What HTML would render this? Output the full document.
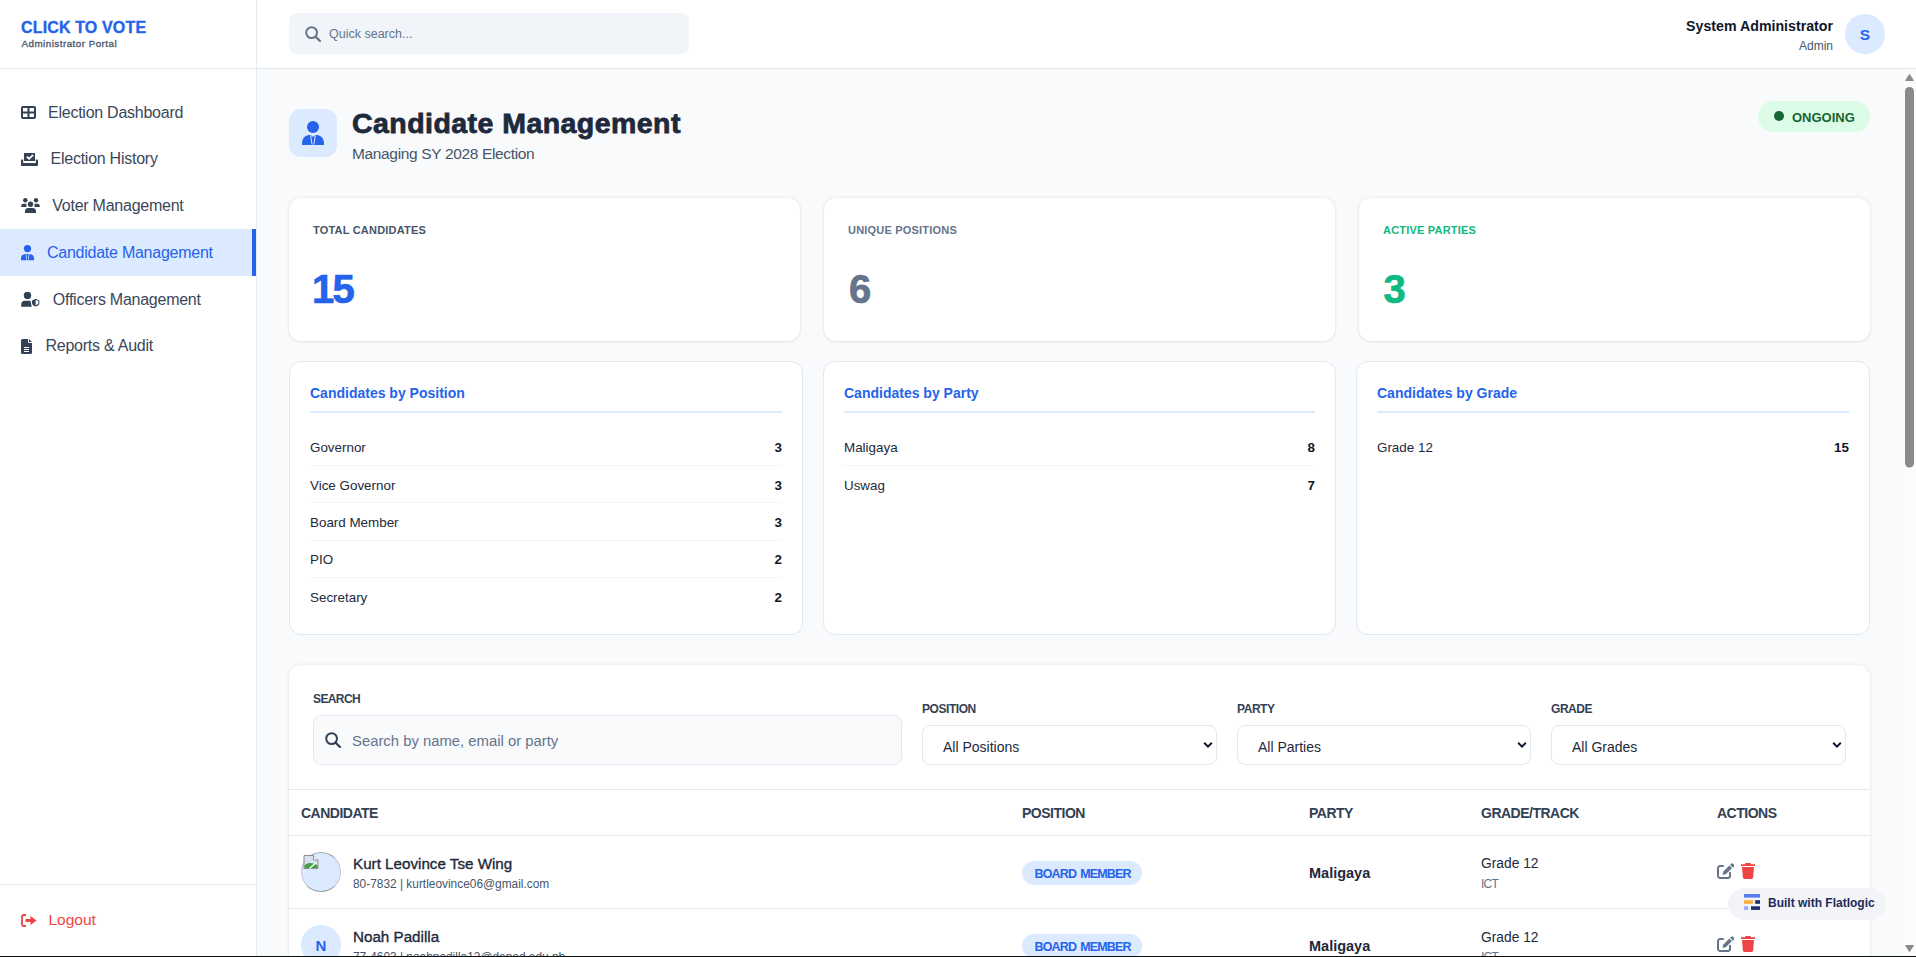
<!DOCTYPE html>
<html>
<head>
<meta charset="utf-8">
<style>
*{box-sizing:border-box;margin:0;padding:0}
html,body{width:1916px;height:957px;overflow:hidden;background:#fff}
body{font-family:"Liberation Sans",sans-serif;position:relative;color:#1e293b}
.abs{position:absolute;white-space:nowrap}
svg{display:block}
/* sidebar */
#side{position:absolute;left:0;top:0;width:256px;height:957px;background:#fff}
#sideb{position:absolute;left:256px;top:0;width:1px;height:957px;background:#e2e8f0}
#hdrb{position:absolute;left:0;top:68px;width:1916px;height:1px;background:#e2e8f0}
.nav{position:absolute;left:0;width:256px;height:47px}
.nav .t{position:absolute;top:-0.3px;line-height:47px;font-size:16px;letter-spacing:-0.25px;color:#3a475b}
.nav svg{position:absolute}
.nav.act{background:#dbeafe}
.nav.act .t{color:#2563eb}
.nav.act:after{content:"";position:absolute;right:0;top:0;width:4px;height:100%;background:#2563eb}
/* main */
#main{position:absolute;left:257px;top:69px;width:1645px;height:888px;background:#f8fafc;overflow:hidden}
#sb{position:absolute;left:1902px;top:69px;width:14px;height:888px;background:#fbfbfb}
.card{position:absolute;background:#fff;border-radius:12px;box-shadow:0 0 3.5px rgba(0,0,0,.11),0 1px 2px rgba(0,0,0,.05)}
.bcard{position:absolute;background:#fff;border-radius:12px;border:1px solid #e2e8f0}
</style>
</head>
<body>
<!-- SIDEBAR -->
<div id="side">
  <div class="abs" style="left:21px;top:17px;font-size:16px;font-weight:700;color:#2563eb;line-height:22px;letter-spacing:0.15px;transform:scaleY(1.06);transform-origin:0 100%;-webkit-text-stroke:0.35px #2563eb">CLICK TO VOTE</div>
  <div class="abs" style="left:21.5px;top:38.1px;font-size:9.8px;font-weight:400;color:#475569;line-height:12px;letter-spacing:0.48px;-webkit-text-stroke:0.3px #475569">Administrator Portal</div>

  <div class="nav" style="top:89px">
    <svg style="left:21px;top:17px" width="15" height="13" viewBox="0 0 15 13"><path fill="#334155" d="M2 0h11a2 2 0 0 1 2 2v9a2 2 0 0 1-2 2H2a2 2 0 0 1-2-2V2a2 2 0 0 1 2-2zM2 2v3.5h4.5V2zm6.5 0v3.5H13V2zM2 7.5V11h4.5V7.5zm6.5 0V11H13V7.5z"/></svg>
    <div class="t" style="left:48px">Election Dashboard</div>
  </div>
  <div class="nav" style="top:135.75px">
    <svg style="left:21px;top:17.25px" width="17" height="13" viewBox="0 0 17 13"><path fill="#334155" d="M3 0h11v8H3z"/><path fill="#fff" d="M5.2 4.2l1.3-1.2 1.6 1.6 3.5-3.4 1.2 1.2-4.7 4.6z"/><path fill="#334155" d="M0 7.5a1 1 0 0 1 1-1h1.2V10h12.6V6.5H16a1 1 0 0 1 1 1V12a1 1 0 0 1-1 1H1a1 1 0 0 1-1-1z"/></svg>
    <div class="t" style="left:50.5px">Election History</div>
  </div>
  <div class="nav" style="top:182.5px">
    <svg style="left:21px;top:15.5px" width="19" height="15" viewBox="0 0 19 15"><circle cx="4.3" cy="2.2" r="2.2" fill="#334155"/><circle cx="15" cy="2.2" r="2.2" fill="#334155"/><path fill="#334155" d="M0.2 9V8.2A2.4 2.4 0 0 1 2.6 5.8h3a3.6 3.6 0 0 0 .2 3.2zM18.8 9V8.2a2.4 2.4 0 0 0-2.4-2.4h-3a3.6 3.6 0 0 1-.2 3.2z"/><circle cx="9.5" cy="6.3" r="2.7" fill="#334155"/><path fill="#334155" d="M4 15v-1.6A3.4 3.4 0 0 1 7.4 10h4.2a3.4 3.4 0 0 1 3.4 3.4V15z"/></svg>
    <div class="t" style="left:52.3px">Voter Management</div>
  </div>
  <div class="nav act" style="top:229.25px">
    <svg style="left:21px;top:15.75px" width="13" height="16" viewBox="0 0 13 16"><circle cx="6.5" cy="3.6" r="3.6" fill="#2563eb"/><path fill="#2563eb" d="M0 15.2v-1.2A5 5 0 0 1 4.2 8.9h4.6A5 5 0 0 1 13 14v1.2z"/><path d="M5 9.1l.7 5.6M8 9.1l-.7 5.6" stroke="#dbeafe" stroke-width="0.75" fill="none"/></svg>
    <div class="t" style="left:47px">Candidate Management</div>
  </div>
  <div class="nav" style="top:276px">
    <svg style="left:21px;top:16px" width="19" height="15" viewBox="0 0 19 15"><circle cx="6.5" cy="3.4" r="3.7" fill="#334155"/><path fill="#334155" d="M0.2 14.8V12.6A3.8 3.8 0 0 1 4 8.8h4.6a3.8 3.8 0 0 1 2 .6V14.8z"/><path d="M14.7 6.3l4.3 1.8v2.6c0 2.3-1.8 3.8-4.3 4.4-2.5-.6-4.3-2.1-4.3-4.4V8.1z" fill="#334155" stroke="#fff" stroke-width="1.2"/><path d="M14.7 8v5.4c1.6-.5 2.7-1.5 2.7-2.8V9.1z" fill="#fff"/></svg>
    <div class="t" style="left:52.8px">Officers Management</div>
  </div>
  <div class="nav" style="top:322.75px">
    <svg style="left:21px;top:16.25px" width="11" height="15" viewBox="0 0 11 15"><path fill="#334155" d="M1.5 0H7v2.8A1.2 1.2 0 0 0 8.2 4H11v9.5A1.5 1.5 0 0 1 9.5 15h-8A1.5 1.5 0 0 1 0 13.5v-12A1.5 1.5 0 0 1 1.5 0zM8 0l3 3H8z"/><path fill="#fff" d="M3 8h5v1H3zm0 2h5v1H3zm0 2h5v1H3z"/></svg>
    <div class="t" style="left:45.5px">Reports &amp; Audit</div>
  </div>

  <div class="abs" style="left:0;top:884px;width:256px;height:1px;background:#e2e8f0"></div>
  <svg class="abs" style="left:20.5px;top:914px" width="16" height="13" viewBox="0 0 16 13"><path fill="none" stroke="#ef4444" stroke-width="1.8" d="M5 1H2.5A1.5 1.5 0 0 0 1 2.5v8A1.5 1.5 0 0 0 2.5 12H5"/><path fill="#ef4444" d="M4.5 5h5V2l6 4.5-6 4.5V8h-5z"/></svg>
  <div class="abs" style="left:48.5px;top:910px;font-size:15.5px;line-height:20px;color:#ef4444">Logout</div>
</div>
<div id="sideb"></div>

<!-- HEADER -->
<div class="abs" style="left:289px;top:13px;width:400px;height:41px;background:#f1f5f9;border-radius:8px"></div>
<svg class="abs" style="left:305px;top:26px" width="16" height="16" viewBox="0 0 16 16"><circle cx="6.6" cy="6.6" r="5.4" fill="none" stroke="#64748b" stroke-width="2"/><path d="M10.6 10.6l4.4 4.4" stroke="#64748b" stroke-width="2.2" stroke-linecap="round"/></svg>
<div class="abs" style="left:329px;top:26px;font-size:12.5px;line-height:16px;color:#64748b">Quick search...</div>

<div class="abs" style="top:16.5px;font-size:14.2px;font-weight:700;line-height:18px;color:#0f172a;text-align:right;right:83px">System Administrator</div>
<div class="abs" style="right:83px;top:37.5px;font-size:12px;line-height:16px;color:#475569;text-align:right">Admin</div>
<div class="abs" style="left:1845px;top:14px;width:40px;height:40px;border-radius:50%;background:#dbeafe;color:#2563eb;font-weight:700;font-size:15.5px;line-height:42px;text-align:center">S</div>

<div id="hdrb"></div>

<!-- MAIN -->
<div id="main"></div>
<div id="sb"></div>

<!-- page header -->
<div class="abs" style="left:289px;top:109px;width:48px;height:48px;border-radius:12px;background:#dbeafe"></div>
<svg class="abs" style="left:302px;top:121px" width="22" height="24" viewBox="0 0 22 24"><circle cx="11" cy="6" r="6" fill="#2563eb"/><path fill="#2563eb" d="M0 24v-2A8.5 8.5 0 0 1 6.5 14h9A8.5 8.5 0 0 1 22 22v2z"/><path d="M8.6 14.3l1.5 9.2M13.4 14.3l-1.5 9.2" stroke="#dbeafe" stroke-width="1" fill="none"/><path d="M9.3 14h3.4l-.6 1.6h-2.2z" fill="#dbeafe"/></svg>
<div class="abs" style="left:352px;top:105px;font-size:28.5px;font-weight:700;line-height:36px;color:#1e293b;letter-spacing:0.45px;-webkit-text-stroke:0.8px #1e293b">Candidate Management</div>
<div class="abs" style="left:352px;top:145.4px;font-size:15.5px;line-height:18px;color:#475569;letter-spacing:-0.35px">Managing SY 2028 Election</div>

<div class="abs" style="left:1758px;top:101px;width:112px;height:31px;border-radius:16px;background:#dcfce7"></div>
<div class="abs" style="left:1774px;top:111px;width:10px;height:10px;border-radius:50%;background:#166534"></div>
<div class="abs" style="left:1792px;top:109px;font-size:13px;font-weight:700;line-height:18px;color:#166534">ONGOING</div>

<!-- stat cards -->
<div class="card" style="left:289px;top:198px;width:511px;height:143px"></div>
<div class="card" style="left:824px;top:198px;width:511px;height:143px"></div>
<div class="card" style="left:1359px;top:198px;width:511px;height:143px"></div>
<div class="abs" style="left:313px;top:223px;font-size:11px;font-weight:700;line-height:14px;color:#475569;letter-spacing:0.2px">TOTAL CANDIDATES</div>
<div class="abs" style="left:848px;top:223px;font-size:11px;font-weight:700;line-height:14px;color:#64748b;letter-spacing:0.2px">UNIQUE POSITIONS</div>
<div class="abs" style="left:1383px;top:223px;font-size:11px;font-weight:700;line-height:14px;color:#10b981;letter-spacing:0.2px">ACTIVE PARTIES</div>
<div class="abs" style="left:312px;top:266px;font-size:40px;font-weight:700;line-height:46px;color:#2563eb;letter-spacing:-1.8px;-webkit-text-stroke:0.7px #2563eb">15</div>
<div class="abs" style="left:849px;top:266px;font-size:40px;font-weight:700;line-height:46px;color:#64748b;-webkit-text-stroke:0.7px #64748b">6</div>
<div class="abs" style="left:1383.5px;top:266px;font-size:40px;font-weight:700;line-height:46px;color:#10b981;-webkit-text-stroke:0.7px #10b981">3</div>

<!-- breakdown cards -->
<div class="bcard" style="left:289px;top:361px;width:513.67px;height:274px"></div>
<div class="bcard" style="left:822.67px;top:361px;width:513.67px;height:274px"></div>
<div class="bcard" style="left:1356.33px;top:361px;width:513.67px;height:274px"></div>

<div class="abs" style="left:310px;top:384px;font-size:14px;font-weight:700;line-height:18px;color:#2563eb">Candidates by Position</div>
<div class="abs" style="left:310px;top:411px;width:472px;height:2px;background:#dbeafe"></div>
<div class="abs" style="left:844px;top:384px;font-size:14px;font-weight:700;line-height:18px;color:#2563eb">Candidates by Party</div>
<div class="abs" style="left:844px;top:411px;width:471px;height:2px;background:#dbeafe"></div>
<div class="abs" style="left:1377px;top:384px;font-size:14px;font-weight:700;line-height:18px;color:#2563eb">Candidates by Grade</div>
<div class="abs" style="left:1377px;top:411px;width:472px;height:2px;background:#dbeafe"></div>
<div class="abs" style="left:310px;top:440.2px;font-size:13.4px;line-height:16px;color:#1e293b">Governor</div>
<div class="abs" style="left:722px;width:60px;text-align:right;top:440.2px;font-size:13.4px;font-weight:700;line-height:16px;color:#0f172a">3</div>
<div class="abs" style="left:310px;top:465.1px;width:472px;height:1px;background:#f1f5f9"></div>
<div class="abs" style="left:310px;top:477.6px;font-size:13.4px;line-height:16px;color:#1e293b">Vice Governor</div>
<div class="abs" style="left:722px;width:60px;text-align:right;top:477.6px;font-size:13.4px;font-weight:700;line-height:16px;color:#0f172a">3</div>
<div class="abs" style="left:310px;top:502.4px;width:472px;height:1px;background:#f1f5f9"></div>
<div class="abs" style="left:310px;top:514.9px;font-size:13.4px;line-height:16px;color:#1e293b">Board Member</div>
<div class="abs" style="left:722px;width:60px;text-align:right;top:514.9px;font-size:13.4px;font-weight:700;line-height:16px;color:#0f172a">3</div>
<div class="abs" style="left:310px;top:539.7px;width:472px;height:1px;background:#f1f5f9"></div>
<div class="abs" style="left:310px;top:552.2px;font-size:13.4px;line-height:16px;color:#1e293b">PIO</div>
<div class="abs" style="left:722px;width:60px;text-align:right;top:552.2px;font-size:13.4px;font-weight:700;line-height:16px;color:#0f172a">2</div>
<div class="abs" style="left:310px;top:577.0px;width:472px;height:1px;background:#f1f5f9"></div>
<div class="abs" style="left:310px;top:589.5px;font-size:13.4px;line-height:16px;color:#1e293b">Secretary</div>
<div class="abs" style="left:722px;width:60px;text-align:right;top:589.5px;font-size:13.4px;font-weight:700;line-height:16px;color:#0f172a">2</div>
<div class="abs" style="left:844px;top:440.2px;font-size:13.4px;line-height:16px;color:#1e293b">Maligaya</div>
<div class="abs" style="left:1255px;width:60px;text-align:right;top:440.2px;font-size:13.4px;font-weight:700;line-height:16px;color:#0f172a">8</div>
<div class="abs" style="left:844px;top:465.1px;width:471px;height:1px;background:#f1f5f9"></div>
<div class="abs" style="left:844px;top:477.6px;font-size:13.4px;line-height:16px;color:#1e293b">Uswag</div>
<div class="abs" style="left:1255px;width:60px;text-align:right;top:477.6px;font-size:13.4px;font-weight:700;line-height:16px;color:#0f172a">7</div>
<div class="abs" style="left:1377px;top:440.2px;font-size:13.4px;line-height:16px;color:#1e293b">Grade 12</div>
<div class="abs" style="left:1789px;width:60px;text-align:right;top:440.2px;font-size:13.4px;font-weight:700;line-height:16px;color:#0f172a">15</div>

<!-- filter card -->
<div class="card" style="left:289px;top:665px;width:1581px;height:300px;border-radius:12px"></div>
<div class="abs" style="left:313px;top:691.7px;font-size:12px;font-weight:700;line-height:14px;color:#334155;letter-spacing:-0.6px">SEARCH</div>
<div class="abs" style="left:313px;top:715px;width:589px;height:50px;border:1px solid #e2e8f0;border-radius:8px;background:#f8fafc"></div>
<svg class="abs" style="left:325px;top:732px" width="16" height="16" viewBox="0 0 16 16"><circle cx="6.6" cy="6.6" r="5.4" fill="none" stroke="#334155" stroke-width="2"/><path d="M10.6 10.6l4.4 4.4" stroke="#334155" stroke-width="2.2" stroke-linecap="round"/></svg>
<div class="abs" style="left:352px;top:732.3px;font-size:14.85px;line-height:18px;color:#64748b">Search by name, email or party</div>
<div class="abs" style="left:922px;top:701.6px;font-size:12px;font-weight:700;line-height:14px;color:#334155;letter-spacing:-0.45px">POSITION</div>
<div class="abs" style="left:922px;top:725px;width:295px;height:40px;border:1px solid #e2e8f0;border-radius:8px;background:#fff"></div>
<div class="abs" style="left:943px;top:738px;font-size:14px;line-height:18px;color:#1e293b">All Positions</div>
<svg class="abs" style="left:1203px;top:741px" width="10" height="8" viewBox="0 0 10 8"><path d="M1.2 1.8l3.8 3.8 3.8-3.8" fill="none" stroke="#0f172a" stroke-width="2"/></svg>
<div class="abs" style="left:1237px;top:701.6px;font-size:12px;font-weight:700;line-height:14px;color:#334155;letter-spacing:-0.45px">PARTY</div>
<div class="abs" style="left:1237px;top:725px;width:294px;height:40px;border:1px solid #e2e8f0;border-radius:8px;background:#fff"></div>
<div class="abs" style="left:1258px;top:738px;font-size:14px;line-height:18px;color:#1e293b">All Parties</div>
<svg class="abs" style="left:1517px;top:741px" width="10" height="8" viewBox="0 0 10 8"><path d="M1.2 1.8l3.8 3.8 3.8-3.8" fill="none" stroke="#0f172a" stroke-width="2"/></svg>
<div class="abs" style="left:1551px;top:701.6px;font-size:12px;font-weight:700;line-height:14px;color:#334155;letter-spacing:-0.45px">GRADE</div>
<div class="abs" style="left:1551px;top:725px;width:295px;height:40px;border:1px solid #e2e8f0;border-radius:8px;background:#fff"></div>
<div class="abs" style="left:1572px;top:738px;font-size:14px;line-height:18px;color:#1e293b">All Grades</div>
<svg class="abs" style="left:1832px;top:741px" width="10" height="8" viewBox="0 0 10 8"><path d="M1.2 1.8l3.8 3.8 3.8-3.8" fill="none" stroke="#0f172a" stroke-width="2"/></svg>

<div class="abs" style="left:289px;top:789px;width:1581px;height:1px;background:#e2e8f0"></div>

<!-- table -->
<div class="abs" style="left:301px;top:805.2px;font-size:14px;font-weight:700;line-height:16px;color:#334155;letter-spacing:-0.5px">CANDIDATE</div>
<div class="abs" style="left:1022px;top:805.2px;font-size:14px;font-weight:700;line-height:16px;color:#334155;letter-spacing:-0.5px">POSITION</div>
<div class="abs" style="left:1309px;top:805.2px;font-size:14px;font-weight:700;line-height:16px;color:#334155;letter-spacing:-0.5px">PARTY</div>
<div class="abs" style="left:1481px;top:805.2px;font-size:14px;font-weight:700;line-height:16px;color:#334155;letter-spacing:-0.5px">GRADE/TRACK</div>
<div class="abs" style="left:1717px;top:805.2px;font-size:14px;font-weight:700;line-height:16px;color:#334155;letter-spacing:-0.5px">ACTIONS</div>
<div class="abs" style="left:289px;top:835px;width:1581px;height:1px;background:#e2e8f0"></div>
<div class="abs" style="left:301px;top:852px;width:40px;height:40px;border-radius:50%;background:#dbeafe;border-top:1px solid #a3a3a3;border-bottom:1px solid #a3a3a3;border-left:1px solid rgba(163,163,163,.45);border-right:1px solid rgba(163,163,163,.45)"></div>
<svg class="abs" style="left:303px;top:854px" width="17" height="17" viewBox="0 0 17 17"><path d="M1 1.5h9.5l4.5 4.5V14.5H1z" fill="#d5e0f2" stroke="#8f8f8f" stroke-width="1"/><path d="M10.5 1.5v4.5H15" fill="#fff" stroke="#8f8f8f" stroke-width="1"/><path d="M1.5 14V11.5C4 8.5 9 8 14.5 11.5V14z" fill="#43a047"/><path d="M6.5 14.5l6-5.5" stroke="#fff" stroke-width="1.3"/></svg>
<div class="abs" style="left:353px;top:855px;font-size:15.2px;font-weight:400;line-height:18px;color:#1e293b;-webkit-text-stroke:0.35px #1e293b">Kurt Leovince Tse Wing</div>
<div class="abs" style="left:353px;top:877px;font-size:11.9px;line-height:14px;color:#475569">80-7832 | kurtleovince06@gmail.com</div>
<div class="abs" style="left:1022px;top:861px;width:120px;height:24px;border-radius:12px;background:#dbeafe"></div>
<div class="abs" style="left:1034.5px;top:866.6px;font-size:12.5px;font-weight:700;line-height:14px;color:#2563eb;letter-spacing:-0.85px;word-spacing:1.5px">BOARD MEMBER</div>
<div class="abs" style="left:1309px;top:864px;font-size:14.5px;font-weight:700;line-height:18px;color:#1e293b">Maligaya</div>
<div class="abs" style="left:1481px;top:855.3px;font-size:13.8px;line-height:17px;color:#1e293b">Grade 12</div>
<div class="abs" style="left:1481px;top:877.0px;font-size:12px;line-height:14px;color:#64748b;letter-spacing:-0.8px">ICT</div>
<svg class="abs" style="left:1717px;top:863px" width="17" height="16" viewBox="0 0 17 16"><path d="M6 3H3.2A2.2 2.2 0 0 0 1 5.2v7.6A2.2 2.2 0 0 0 3.2 15h7.6a2.2 2.2 0 0 0 2.2-2.2V9.8" fill="none" stroke="#64748b" stroke-width="2" stroke-linecap="round"/><path d="M5.5 11.9L6.4 8.5l6-6 2.6 2.6-6 6z" fill="#64748b"/><path d="M13.1 1.8l.9-.9a1.6 1.6 0 0 1 2.3 0l.6.6a1.6 1.6 0 0 1 0 2.3l-.9.9z" fill="#64748b"/></svg>
<svg class="abs" style="left:1741px;top:863px" width="14" height="16" viewBox="0 0 14 16"><path d="M4.5 0h5l.5 1.2H14V3H0V1.2h4z" fill="#ef4444"/><path d="M1 4h12l-.9 10.6A1.5 1.5 0 0 1 10.6 16H3.4a1.5 1.5 0 0 1-1.5-1.4z" fill="#ef4444"/></svg>
<div class="abs" style="left:289px;top:908px;width:1581px;height:1px;background:#e2e8f0"></div>
<div style="position:absolute;left:0;top:0.3px;width:1916px;height:957px">
<div class="abs" style="left:301px;top:925px;width:40px;height:40px;border-radius:50%;background:#dbeafe;color:#2563eb;font-weight:700;font-size:15px;line-height:42px;text-align:center">N</div>
<div class="abs" style="left:353px;top:928px;font-size:15.2px;font-weight:400;line-height:18px;color:#1e293b;-webkit-text-stroke:0.35px #1e293b">Noah Padilla</div>
<div class="abs" style="left:353px;top:950px;font-size:11.9px;line-height:14px;color:#475569">77-4603 | noahpadilla12@deped.edu.ph</div>
<div class="abs" style="left:1022px;top:934px;width:120px;height:24px;border-radius:12px;background:#dbeafe"></div>
<div class="abs" style="left:1034.5px;top:939.6px;font-size:12.5px;font-weight:700;line-height:14px;color:#2563eb;letter-spacing:-0.85px;word-spacing:1.5px">BOARD MEMBER</div>
<div class="abs" style="left:1309px;top:937px;font-size:14.5px;font-weight:700;line-height:18px;color:#1e293b">Maligaya</div>
<div class="abs" style="left:1481px;top:928.3px;font-size:13.8px;line-height:17px;color:#1e293b">Grade 12</div>
<div class="abs" style="left:1481px;top:950.0px;font-size:12px;line-height:14px;color:#64748b;letter-spacing:-0.8px">ICT</div>
<svg class="abs" style="left:1717px;top:936px" width="17" height="16" viewBox="0 0 17 16"><path d="M6 3H3.2A2.2 2.2 0 0 0 1 5.2v7.6A2.2 2.2 0 0 0 3.2 15h7.6a2.2 2.2 0 0 0 2.2-2.2V9.8" fill="none" stroke="#64748b" stroke-width="2" stroke-linecap="round"/><path d="M5.5 11.9L6.4 8.5l6-6 2.6 2.6-6 6z" fill="#64748b"/><path d="M13.1 1.8l.9-.9a1.6 1.6 0 0 1 2.3 0l.6.6a1.6 1.6 0 0 1 0 2.3l-.9.9z" fill="#64748b"/></svg>
<svg class="abs" style="left:1741px;top:936px" width="14" height="16" viewBox="0 0 14 16"><path d="M4.5 0h5l.5 1.2H14V3H0V1.2h4z" fill="#ef4444"/><path d="M1 4h12l-.9 10.6A1.5 1.5 0 0 1 10.6 16H3.4a1.5 1.5 0 0 1-1.5-1.4z" fill="#ef4444"/></svg>
<div class="abs" style="left:289px;top:981px;width:1581px;height:1px;background:#e2e8f0"></div>
</div>
<div class="abs" style="left:1728px;top:888px;width:158px;height:32px;border-radius:16px;background:#f3f4f8"></div>
<svg class="abs" style="left:1744px;top:894px" width="16" height="16" viewBox="0 0 16 16"><rect x="0" y="0" width="16" height="3.6" fill="#5b7cf0"/><rect x="0" y="6.2" width="9" height="3.6" fill="#fdb03b"/><rect x="11.2" y="6.2" width="4.8" height="3.6" fill="#1d2f6b"/><rect x="0" y="12.3" width="4.2" height="3.6" fill="#9ba8f7"/><rect x="7" y="12.3" width="9" height="3.6" fill="#1d2f6b"/></svg>
<div class="abs" style="left:1768px;top:896px;font-size:12px;font-weight:700;line-height:14px;color:#1e2a5a">Built with Flatlogic</div>


<!-- scrollbar -->
<svg class="abs" style="left:1902px;top:69px" width="14" height="888" viewBox="0 0 14 888"><path d="M3.8 11.5L7.5 5.8l3.7 5.7z" fill="#8a8a8a" stroke="#8a8a8a" stroke-width="1.2" stroke-linejoin="round"/><rect x="3" y="18" width="9" height="380.5" rx="4.5" fill="#8a8a8a"/><path d="M3.8 876.5L7.5 882.2l3.7-5.7z" fill="#8a8a8a" stroke="#8a8a8a" stroke-width="1.2" stroke-linejoin="round"/></svg>
<div class="abs" style="left:0;top:956px;width:1916px;height:1px;background:#0b0f0e"></div>


</body>
</html>
